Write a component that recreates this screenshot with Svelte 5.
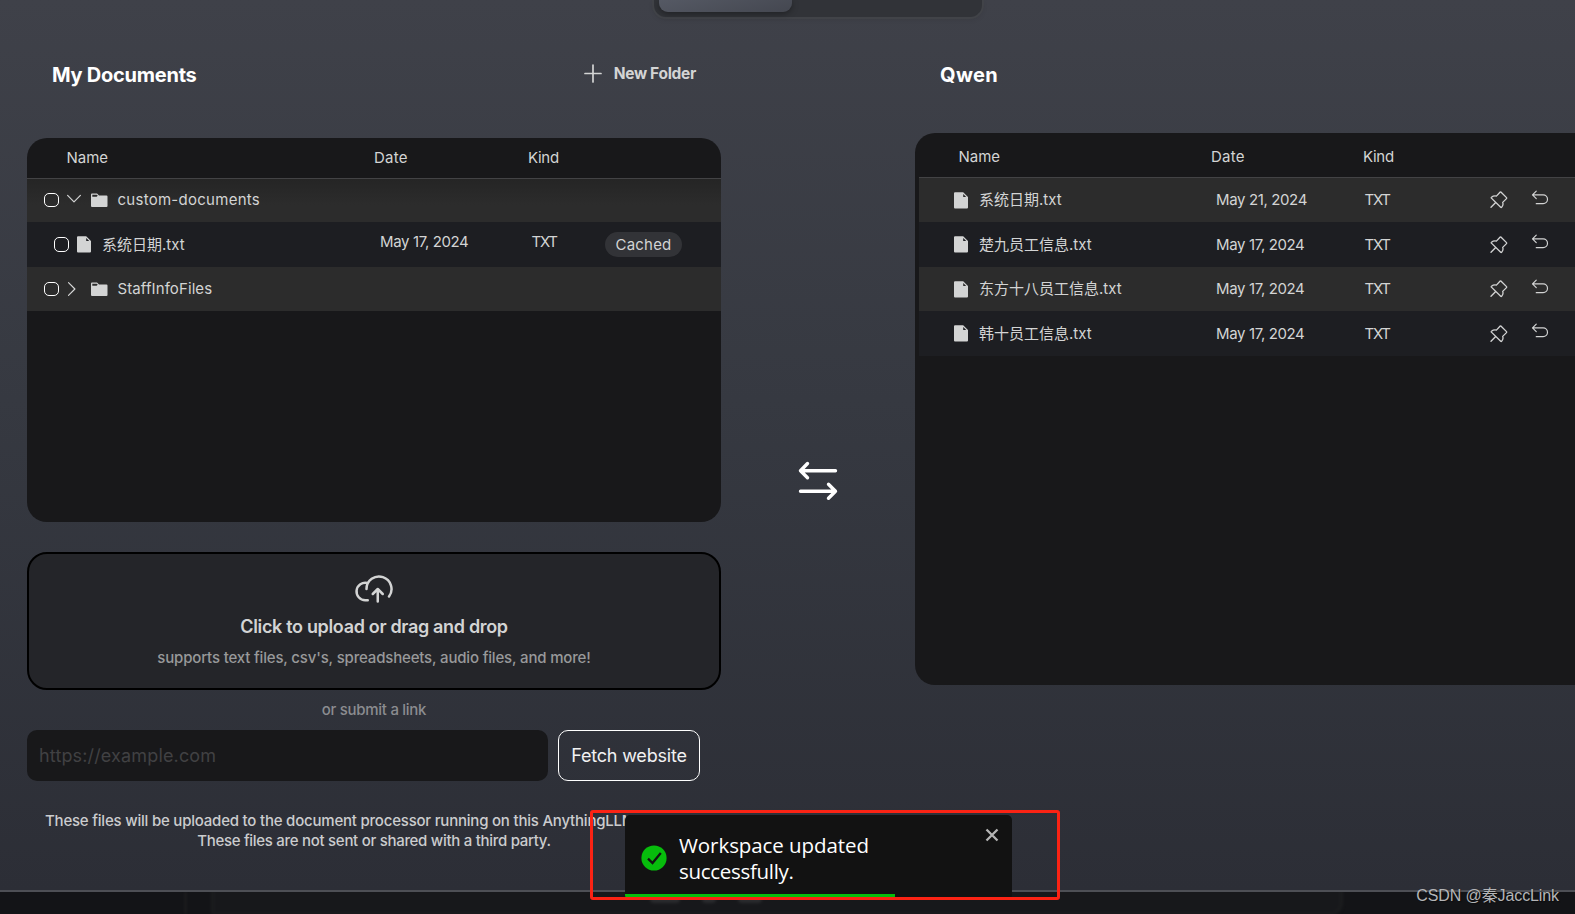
<script lang="ts">
  type Doc = { name: string; date: string; kind: string };

  const workspaceDocs: Doc[] = [
    { name: '系统日期.txt', date: 'May 21, 2024', kind: 'TXT' },
    { name: '楚九员工信息.txt', date: 'May 17, 2024', kind: 'TXT' },
    { name: '东方十八员工信息.txt', date: 'May 17, 2024', kind: 'TXT' },
    { name: '韩十员工信息.txt', date: 'May 17, 2024', kind: 'TXT' },
  ];

  let link = $state('');
  let toastOpen = $state(true);
</script>

{#snippet fileIcon()}
  <svg class="file-icon" width="14" height="17" viewBox="0 0 14 17">
    <path fill="currentColor" fill-rule="evenodd" d="M1 .3H9.2L14 5V15.500a1 1 0 0 1-1 1H1a1 1 0 0 1-1-1V1.300a1 1 0 0 1 1-1zM9.200 2V5H12.200z" />
  </svg>
{/snippet}

{#snippet folderIcon()}
  <svg width="17" height="14" viewBox="0 0 17 14">
    <path fill="currentColor" fill-rule="evenodd" d="M1 .5H6L8 2.500H15.500a1 1 0 0 1 1 1V13a1 1 0 0 1-1 1H1a1 1 0 0 1-1-1V1.500a1 1 0 0 1 1-1zM1.300 1.700V3.800H5.600L6.800 2.700L5.700 1.700z" />
  </svg>
{/snippet}

<div class="page">
  <div class="modal">
    <div class="tabs"><div class="tab-active"></div></div>

    <div class="columns">
      <section class="left">
        <header class="panel-title">
          <h3>My Documents</h3>
          <button class="new-folder">
            <svg width="18" height="19" viewBox="0 0 18 19" fill="none" stroke="currentColor" stroke-width="1.7" stroke-linecap="round">
              <path d="M9 1v17M1 9.500h16" />
            </svg>
            <span>New Folder</span>
          </button>
        </header>

        <div class="directory">
          <div class="dir-head">
            <span>Name</span><span class="date-head">Date</span><span class="kind-head">Kind</span>
          </div>
          <div class="dir-row folder first">
            <div class="cell">
              <span class="checkbox"></span>
              <svg class="chevron" width="16" height="16" viewBox="0 0 16 16" fill="none" stroke="currentColor" stroke-width="1.200" stroke-linecap="round" stroke-linejoin="round">
                <path d="M1.600 3.400L8 9.800L14.400 3.400" />
              </svg>
              {@render folderIcon()}
              <span class="folder-name">custom-documents</span>
            </div>
          </div>
          <div class="dir-row file">
            <div class="cell">
              <span class="checkbox"></span>
              {@render fileIcon()}
              <span class="name">系统日期.txt</span>
            </div>
            <span class="date raised">May 17, 2024</span>
            <span class="kind raised">TXT</span>
            <span class="badge">Cached</span>
          </div>
          <div class="dir-row folder">
            <div class="cell">
              <span class="checkbox"></span>
              <svg class="chevron" width="16" height="16" viewBox="0 0 16 16" fill="none" stroke="currentColor" stroke-width="1.200" stroke-linecap="round" stroke-linejoin="round">
                <path d="M2.500 1.600L8.900 8L2.500 14.400" />
              </svg>
              {@render folderIcon()}
              <span class="folder-name tight">StaffInfoFiles</span>
            </div>
          </div>
        </div>

        <div class="upload">
          <svg width="40" height="40" viewBox="0 0 256 256" fill="none" stroke="currentColor" stroke-width="16" stroke-linecap="round" stroke-linejoin="round">
            <path d="M152 128v80M120 160l32-32 32 32" />
            <path d="M88 200H72A56 56 0 1 1 85.900 89.700" />
            <path d="M80 128a80 80 0 1 1 144 48" />
          </svg>
          <div class="upload-title">Click to upload or drag and drop</div>
          <div class="upload-sub">supports text files, csv's, spreadsheets, audio files, and more!</div>
        </div>

        <div class="or-link">or submit a link</div>

        <form class="fetch">
          <input type="text" placeholder="https://example.com" bind:value={link} />
          <button type="button">Fetch website</button>
        </form>

        <p class="notice">
          <span class="long">These files will be uploaded to the document processor running on this AnythingLLM</span>
          <span class="second">These files are not sent or shared with a third party.</span>
        </p>
      </section>

      <div class="transfer">
        <svg width="40" height="40" viewBox="0 0 40 40" fill="none" stroke="#fff" stroke-width="3.400" stroke-linecap="round" stroke-linejoin="round">
          <path d="M9.500 2.500L2.500 9.700L9.500 16.700M2.500 9.700H37.500" />
          <path d="M30.500 23.200L37.500 30.300L30.500 37.300M37.500 30.300H2.500" />
        </svg>
      </div>

      <section class="right">
        <header class="panel-title">
          <h3 class="wide">Qwen</h3>
        </header>
        <div class="workspace">
          <div class="ws-head">
            <span>Name</span><span class="date-head">Date</span><span class="kind-head">Kind</span>
          </div>
          {#each workspaceDocs as doc}
            <div class="ws-row">
              <div class="cell">
                {@render fileIcon()}
                <span class="name">{doc.name}</span>
              </div>
              <span class="date">{doc.date}</span>
              <span class="kind">{doc.kind}</span>
              <svg class="pin" width="18" height="18" viewBox="0 0 18 18" fill="none" stroke="currentColor" stroke-width="1.300" stroke-linecap="round" stroke-linejoin="round">
                <path d="M10.900 1L16.500 6.600Q17 7.100 16.500 7.600L12.700 11.400Q13.700 13.700 11.700 16.200Q11.200 16.700 10.700 16.200L1.400 7.100Q1 6.600 1.500 6.200Q3.700 4.500 6.400 5.100L10.200 1Q10.600 .7 10.900 1zM5.700 11.500L1 16.300" />
              </svg>
              <svg class="undo" width="20" height="20" viewBox="0 0 256 256" fill="none" stroke="currentColor" stroke-width="15" stroke-linecap="round" stroke-linejoin="round">
                <path d="M80 136L32 88L80 40M80 200h88a56 56 0 0 0 0-112H32" />
              </svg>
            </div>
          {/each}
        </div>
      </section>
    </div>
  </div>

  <!-- blurred app shell behind the modal -->
  <div class="shell">
    <div class="shell-side"></div>
    <div class="shell-main"><i class="b1"></i><i class="b2"></i><i class="b3"></i></div>
  </div>

  {#if toastOpen}
    <div class="toast" role="alert">
      <svg class="ok" width="26" height="26" viewBox="0 0 26 26">
        <circle cx="13" cy="13" r="12.600" fill="#07bc0c" />
        <path d="M7 13.700L11.500 18L19.800 8" fill="none" stroke="#121212" stroke-width="2.300" />
      </svg>
      <div class="toast-text">
        <div>Workspace updated</div>
        <div class="narrow">successfully.</div>
      </div>
      <button class="close" aria-label="close" onclick={() => (toastOpen = false)}>
        <svg width="14" height="14" viewBox="0 0 14 14" stroke="#b5b5b5" stroke-width="2.300" fill="none">
          <path d="M1.500 1.500l11 11M12.500 1.500l-11 11" />
        </svg>
      </button>
      <div class="progress"></div>
    </div>
  {/if}
  <div class="highlight"></div>
  <div class="watermark">CSDN @秦JaccLink</div>
</div>

<style>
  :global(body) {
    margin: 0;
    background: #17181b;
  }

  .page {
    position: relative;
    width: 1575px;
    height: 914px;
    overflow: hidden;
    background: #17181b;
    font-family: Inter, 'Noto Sans CJK SC', sans-serif;
    font-size: 15px;
    color: #d3d4d4;
  }

  .page * {
    box-sizing: border-box;
  }

  .page svg {
    display: block;
    flex: none;
  }

  button {
    background: none;
    border: none;
    padding: 0;
    font: inherit;
    color: inherit;
  }

  .modal {
    height: 892px;
    overflow: hidden;
    border-bottom: 2px solid #4d4f55;
    background: linear-gradient(180deg, #3f4149 0%, #363941 45%, #2c2e36 100%);
  }

  .tabs {
    width: 332px;
    height: 19px;
    margin-left: 652px;
    padding: 0 5px;
    border: 2px solid #414348;
    border-top: none;
    border-radius: 0 0 14px 14px;
    background: #313338;
    box-shadow: 0 2px 4px rgba(0, 0, 0, 0.06);
  }

  .tab-active {
    width: 133px;
    height: 12px;
    border-radius: 0 0 9px 9px;
    background: linear-gradient(165deg, #555964, #444750);
    box-shadow: 0 2px 6px rgba(0, 0, 0, 0.35);
  }

  .columns {
    display: flex;
    width: 1575px;
  }

  .left {
    width: 694px;
    margin-left: 27px;
    flex: none;
  }

  .panel-title {
    display: flex;
    justify-content: space-between;
    align-items: flex-start;
    height: 119px;
    padding: 44px 25px 0 25px;
  }

  h3 {
    margin: 0;
    font-size: 20px;
    font-weight: 700;
    line-height: 24px;
    letter-spacing: -0.25px;
    color: #fff;
  }

  h3.wide {
    letter-spacing: 0.35px;
  }

  .new-folder {
    display: flex;
    gap: 12px;
    height: 20px;
    margin-top: 1px;
    font-size: 15.5px;
    font-weight: 700;
    line-height: 20px;
    letter-spacing: -0.3px;
  }

  .directory {
    height: 384px;
    border-radius: 20px;
    overflow: hidden;
    background: #18181a;
  }

  .dir-head {
    display: grid;
    grid-template-columns: 307.5px 154px auto;
    height: 41px;
    padding-left: 39.5px;
    line-height: 40px;
    border-bottom: 1px solid #434345;
  }

  .date-head {
    letter-spacing: 0.25px;
  }

  .kind-head {
    letter-spacing: -0.3px;
  }

  .dir-row {
    display: grid;
    grid-template-columns: 353px 151.5px 73.5px auto;
    align-items: center;
    height: 44px;
    background: #2c2c2c;
  }

  .dir-row.first {
    height: 43px;
    background: linear-gradient(180deg, #252525, #2c2c2c 60%);
  }

  .dir-row.first .cell {
    margin-bottom: 1px;
  }

  .dir-row.file {
    height: 45px;
    background: #1d1e22;
  }

  .cell {
    display: flex;
    align-items: center;
    white-space: nowrap;
  }

  .name,
  .folder-name {
    line-height: 20px;
  }

  .folder .cell {
    padding-left: 17px;
  }

  .file .cell {
    padding-left: 27px;
  }

  .checkbox {
    width: 15px;
    height: 15px;
    flex: none;
    border: 1px solid #fff;
    border-radius: 5px;
  }

  .folder .checkbox {
    height: 14px;
  }

  .chevron {
    margin: 0 9px 0 7px;
  }

  .folder-name {
    margin-left: 9.5px;
    letter-spacing: 0.27px;
  }

  .folder-name.tight {
    letter-spacing: 0.1px;
  }

  .file-icon {
    margin-right: 11px;
  }

  .file .file-icon {
    margin-left: 8px;
  }

  .date {
    letter-spacing: -0.37px;
  }

  .kind {
    letter-spacing: -1.3px;
  }

  .raised {
    padding-bottom: 6px;
  }

  .badge {
    width: 77px;
    height: 25px;
    border-radius: 13px;
    background: #323337;
    line-height: 25px;
    text-align: center;
    letter-spacing: 0.2px;
  }

  .upload {
    display: flex;
    flex-direction: column;
    align-items: center;
    height: 138px;
    margin-top: 30px;
    padding-top: 15px;
    border: 2px solid #000;
    border-radius: 20px;
    background: #242529;
  }

  .upload-title {
    margin-top: 6px;
    font-size: 18px;
    font-weight: 600;
    line-height: 24px;
    letter-spacing: -0.33px;
  }

  .upload-sub {
    margin-top: 9px;
    font-weight: 500;
    line-height: 20px;
    letter-spacing: -0.17px;
    color: #98999a;
  }

  .or-link {
    margin-top: 9px;
    height: 31px;
    line-height: 21px;
    text-align: center;
    font-weight: 500;
    letter-spacing: -0.28px;
    color: #8b8c90;
  }

  .fetch {
    display: flex;
    gap: 10px;
    margin: 0;
  }

  .fetch input {
    width: 521px;
    height: 51px;
    padding: 0 12px;
    border: none;
    border-radius: 10px;
    outline: none;
    background: #18181a;
    color: #fff;
    font: 18px Inter, sans-serif;
    letter-spacing: 0.15px;
  }

  .fetch input::placeholder {
    color: #414143;
  }

  .fetch button {
    width: 142px;
    height: 51px;
    border: 1px solid #fff;
    border-radius: 10px;
    font-size: 18px;
    letter-spacing: -0.2px;
    color: #f2f2f3;
  }

  .notice {
    margin: 30px 0 0;
    text-align: center;
    font-weight: 500;
    line-height: 20px;
    letter-spacing: -0.21px;
    color: #cbccce;
  }

  .notice span {
    display: block;
    white-space: nowrap;
  }

  .notice .long {
    padding-left: 18px;
    text-align: left;
  }

  .notice .second {
    letter-spacing: -0.29px;
  }

  .transfer {
    width: 194px;
    flex: none;
    padding: 442px 0 0 77px;
  }

  .right {
    flex: 1;
  }

  .right .panel-title {
    height: 114px;
  }

  .workspace {
    height: 552px;
    padding-left: 4px;
    border-radius: 20px 0 0 20px;
    background: #18181a;
  }

  .ws-head {
    display: grid;
    grid-template-columns: 252.5px 152px auto;
    height: 45px;
    padding: 3px 0 0 39.5px;
    line-height: 41px;
    border-bottom: 1px solid #434345;
  }

  .ws-row {
    display: grid;
    grid-template-columns: 297px 148.5px 125.5px 40px auto;
    align-items: center;
    height: 44px;
    background: #2c2c2c;
  }

  .ws-row:nth-child(odd) {
    height: 45px;
    background: #1d1e22;
  }

  .ws-row:nth-child(even) .date,
  .ws-row:nth-child(even) .kind {
    padding-bottom: 1px;
  }

  .ws-row .cell {
    padding-left: 35px;
  }

  .ws-row .undo {
    margin-bottom: 5px;
  }

  .shell {
    display: flex;
    gap: 24px;
    height: 22px;
    overflow: hidden;
    background: #131417;
  }

  .shell-side {
    width: 187px;
    border-right: 3px solid #1a1b1d;
    filter: blur(1px);
  }

  .shell-main {
    display: flex;
    gap: 22px;
    width: 1132px;
    height: 40px;
    margin-top: -16px;
    padding: 16px 0 0 436px;
    border: 3px solid #1c1d1f;
    border-radius: 0 0 14px 4px;
    background: #17181b;
    filter: blur(1.5px);
  }

  .shell-main i {
    height: 8px;
    border-radius: 4px;
    background: #2a2b2e;
  }

  .b1 {
    width: 30px;
  }

  .b2 {
    width: 14px;
  }

  .b3 {
    width: 24px;
  }

  /* floats over the bottom edge of the modal */
  .toast {
    position: absolute;
    left: 625px;
    top: 815px;
    display: flex;
    width: 387px;
    height: 85px;
    padding: 17px 13px 0 16px;
    overflow: hidden;
    border-radius: 5px;
    background: #121212;
    color: #fff;
    font-family: 'Open Sans', sans-serif;
    font-size: 20.5px;
    line-height: 26px;
  }

  .ok {
    margin: 13px 12px 0 0;
  }

  .toast-text {
    flex: 1;
    letter-spacing: -0.07px;
  }

  .narrow {
    letter-spacing: -0.3px;
  }

  .close {
    height: 14px;
    margin-top: -4px;
  }

  .progress {
    position: absolute;
    left: 0;
    bottom: 0;
    width: 270px;
    height: 6px;
    background: #07bc0c;
  }

  .highlight {
    position: absolute;
    left: 590px;
    top: 810px;
    width: 470px;
    height: 90px;
    border: 3px solid #fb2314;
    border-radius: 3px;
  }

  .watermark {
    position: absolute;
    right: 16px;
    top: 885px;
    font-family: 'Liberation Sans', 'Noto Sans CJK SC', sans-serif;
    font-size: 16px;
    line-height: 22px;
    letter-spacing: -0.1px;
    white-space: nowrap;
    color: #b4b5b7;
    text-shadow: 1px 1px 1px rgba(0, 0, 0, 0.4);
  }
</style>
